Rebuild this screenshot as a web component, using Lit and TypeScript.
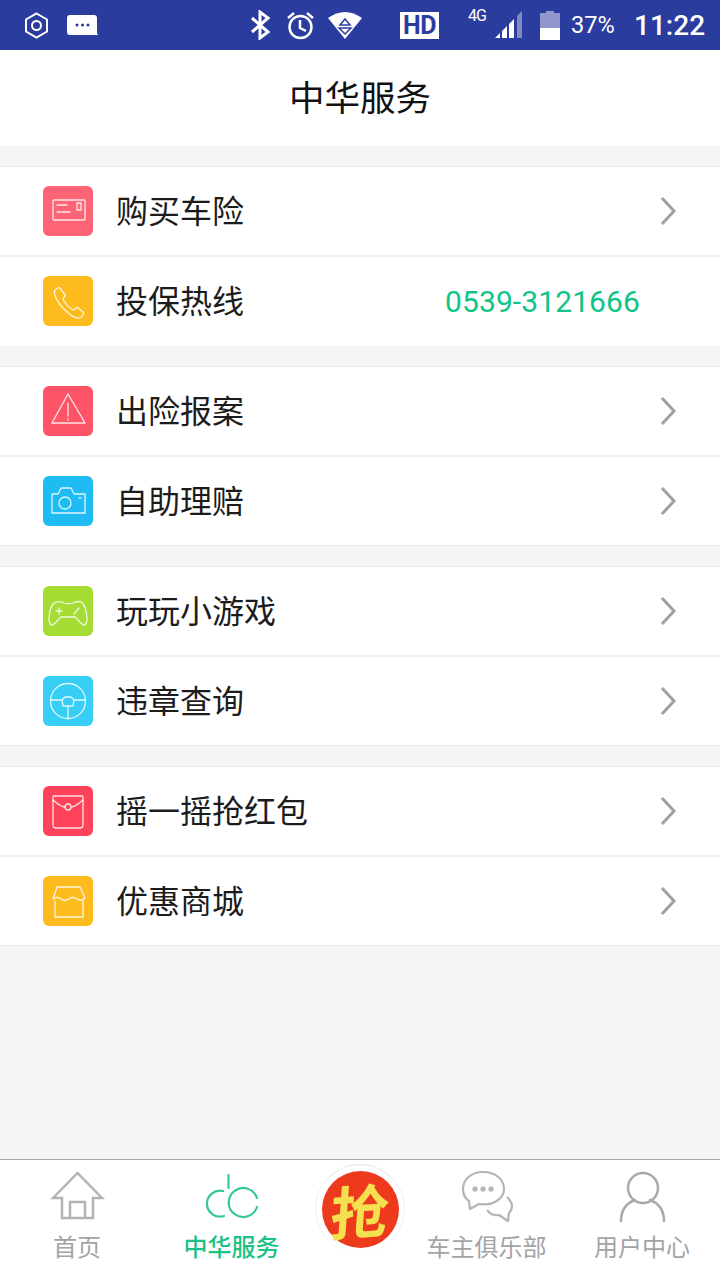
import { LitElement, css, html, svg } from "lit";
import { customElement } from "lit/decorators.js";

const sw = (d: unknown) => html`<svg viewBox="0 0 50 50" fill="none" stroke="rgba(255,255,255,0.85)" stroke-width="1.3" stroke-linecap="round" stroke-linejoin="round">${d}</svg>`;

const icons = {
  card: sw(svg`<rect x="10" y="14" width="32" height="20" rx="1"/><path d="M14 19h10M14 26h13"/><rect x="34" y="17" width="4" height="7"/>`),
  phone: sw(svg`<path d="M12 14c2-2 4-3 5-2l5 7c.5 1-2 3-2 4 1 3 6 9 10 11 1 .5 3-3 4.500-2.500l6 5c1 1-1 4-3 5-3 1.500-8-.5-14-6S9 19 12 14z"/>`),
  warn: sw(svg`<path d="M25 8L42 37H9z"/><path d="M25 17v13M25 33v1"/>`),
  camera: sw(svg`<path d="M9 18h6l3-6h10l3 6h11v19H9z"/><circle cx="22" cy="27" r="6"/><path d="M36 22h2"/>`),
  game: sw(svg`<path d="M10 18c3-3 7-3 11-1 3 1 6 1 9 0 4-2 8-2 10 1 3 4 6 17 2 21-3 1-7-6-10-8H18c-3 2-7 9-10 8-4-4-1-17 2-21z"/><path d="M13 25h6M16 22v6M31 28l5-6"/>`),
  wheel: sw(svg`<circle cx="25" cy="25" r="17.500"/><path d="M8 24h11l3-3h6l3 3h11M25 30v13M20 30h10l1-6M20 30l-1-6"/>`),
  envelope: sw(svg`<path d="M11 10h28q1 0 1 1v28q0 3-3 3H13q-3 0-3-3V11q0-1 1-1z"/><path d="M10 14q8 7 12 7M40 14q-8 7-12 7"/><circle cx="25" cy="21" r="3"/>`),
  store: sw(svg`<path d="M14 11h23l5 11q-4 4-8 1q-4-3-8 0q-4 3-8 0q-4-3-8 0z"/><path d="M12 25v16h28V25"/>`),
};

const groups = [
  [
    { icon: icons.card, color: "#fd6577", label: "购买车险" },
    { icon: icons.phone, color: "#fdbb1e", label: "投保热线", phone: "0539-3121666" },
  ],
  [
    { icon: icons.warn, color: "#fe5468", label: "出险报案" },
    { icon: icons.camera, color: "#1fbcf3", label: "自助理赔" },
  ],
  [
    { icon: icons.game, color: "#a6dd35", label: "玩玩小游戏" },
    { icon: icons.wheel, color: "#36cef5", label: "违章查询" },
  ],
  [
    { icon: icons.envelope, color: "#fd4259", label: "摇一摇抢红包" },
    { icon: icons.store, color: "#fdbb1e", label: "优惠商城" },
  ],
];

@customElement("app-root")
export class AppRoot extends LitElement {
  static styles = css`
    :host {
      display: flex;
      flex-direction: column;
      width: 720px;
      height: 1280px;
      background: #f5f5f5;
      font-family: "Noto Sans CJK SC", "Noto Sans", sans-serif;
      overflow: hidden;
    }

    .status {
      height: 50px;
      flex: none;
      display: flex;
      align-items: center;
      background: #2b3c9f;
      color: #fff;
      font-family: Roboto, sans-serif;
    }
    .status svg { display: block; flex: none; }
    .hex { margin-left: 23px; }
    .msg { margin-left: 17px; }
    .bt { margin-left: 152px; }
    .alarm { margin-left: 15px; }
    .wifi { margin-left: 13px; }
    .hd {
      margin-left: 38px;
      width: 39px;
      height: 27px;
      background: #fff;
      color: #2b3c9f;
      font-size: 25px;
      font-weight: 700;
      line-height: 28px;
      text-align: center;
      letter-spacing: -0.5px;
    }
    .four-g {
      margin: -20px 0 0 29px;
      width: 20px;
      font-size: 16px;
      letter-spacing: -1px;
    }
    .signal { margin-left: 7px; }
    .battery { margin-left: 16px; }
    .pct { margin-left: 11px; font-size: 23.500px; width: 49px; }
    .time { margin-left: 14px; font-size: 28px; font-weight: 500; }

    .title {
      height: 90px;
      padding-bottom: 6px;
      flex: none;
      display: flex;
      align-items: center;
      justify-content: center;
      background: #fff;
      color: #111;
      font-size: 35.500px;
      margin-bottom: 20px;
    }

    .group {
      border-top: 1px solid #e4e4e4;
      border-bottom: 1px solid #e4e4e4;
      background: #fff;
      margin-bottom: 20px;
    }
    .title + .group { border-bottom-color: transparent; }

    .row {
      height: 88px;
      display: flex;
      align-items: center;
      padding-left: 43px;
    }
    .row + .row { border-top: 2px solid #eee; }
    .badge {
      width: 50px;
      height: 50px;
      border-radius: 6px;
      flex: none;
    }
    .badge svg { display: block; width: 50px; height: 50px; }
    .label {
      margin-left: 23px;
      padding-bottom: 4px;
      font-size: 32px;
      line-height: 40px;
      color: #1c1c1c;
      flex: 1;
    }
    .phone {
      margin-right: 80px;
      font-family: Roboto, sans-serif;
      font-size: 30px;
      letter-spacing: 0.1px;
      color: #0fc488;
    }
    .chevron { margin-right: 43px; flex: none; display: block; }

    .spacer { flex: 1; margin-top: -20px; }

    .tabs {
      height: 120px;
      flex: none;
      display: grid;
      grid-template-columns: 154px 155px 100px 155px 156px;
      border-top: 1px solid #a8a8a8;
      background: #fff;
    }
    .tab {
      display: flex;
      flex-direction: column;
      align-items: center;
      font-size: 24px;
      line-height: 30px;
      color: #a3a3a3;
      padding-top: 9px;
    }
    .tab svg { display: block; height: 60px; width: 60px; margin-bottom: 2px; }
    .tab.active { color: #1cc285; font-weight: 500; }
    .grab {
      position: relative;
      display: flex;
      justify-content: center;
    }
    .grab-ring {
      position: absolute;
      top: 4px;
      left: 6px;
      width: 90px;
      height: 90px;
      box-sizing: border-box;
      border-radius: 50%;
      border: 1px solid;
      border-color: #e6e6e6 #f2f2f2 #fafafa;
      display: flex;
      align-items: center;
      justify-content: center;
      background: #fff;
    }
    .grab-coin {
      width: 77px;
      height: 77px;
      border-radius: 50%;
      background: #ee3a1c;
      display: flex;
      align-items: center;
      justify-content: center;
    }
    .grab-coin span {
      color: #f5e04f;
      font-size: 58px;
      font-weight: 700;
      line-height: 76px;
      transform: skewX(-8deg) rotate(-4deg);
    }
  `;

  render() {
    return html`
      <div class="status">
        <svg class="hex" width="27" height="27" viewBox="0 0 27 27" fill="none" stroke="#fff" stroke-width="2">
          <path d="M13.500 1.500L24 7.500v12l-10.500 6-10.500-6v-12z"/><circle cx="13.500" cy="13.500" r="4.500"/>
        </svg>
        <svg class="msg" width="31" height="21" viewBox="0 0 31 21">
          <path fill="#fff" d="M3 0h24q3 0 3 3v15l1 2H3q-3 0-3-3V3q0-3 3-3z"/>
          <circle cx="10" cy="10" r="1.500" fill="#2b3c9f"/><circle cx="15.500" cy="10" r="1.500" fill="#2b3c9f"/><circle cx="21" cy="10" r="1.500" fill="#2b3c9f"/>
        </svg>
        <svg class="bt" width="21" height="30" viewBox="0 0 21 30" fill="none" stroke="#fff" stroke-width="3">
          <path d="M2 8l16 14-8 6V2l8 6L2 22"/>
        </svg>
        <svg class="alarm" width="29" height="29" viewBox="0 0 29 29" fill="none" stroke="#fff" stroke-width="2.500">
          <circle cx="14.500" cy="16" r="11"/><path d="M14 9v8l6 3M2 7l6-5M27 7l-6-5"/>
        </svg>
        <svg class="wifi" width="34" height="28" viewBox="0 0 34 28">
          <path fill="#fff" d="M0 7Q17-5 34 7L17 28z"/>
          <path fill="none" stroke="#2b3c9f" stroke-width="1.500" d="M17 8l5 6H12zM11 17h12l-6 6z"/>
        </svg>
        <div class="hd">HD</div>
        <div class="four-g">4G</div>
        <svg class="signal" width="29" height="30" viewBox="0 0 29 30">
          <path fill="#fff" d="M0 28l5-5v5zM7 21l5-5v12H7zM14 14l5-5v19h-5z"/>
          <path fill="#8089c4" d="M22 6l5-5v27h-5z"/>
        </svg>
        <svg class="battery" width="20" height="29" viewBox="0 0 20 29">
          <path fill="#8f97cc" d="M6 0h8v2h6v15H0V2h6z"/>
          <path fill="#fff" d="M0 17h20v12H0z"/>
        </svg>
        <div class="pct">37%</div>
        <div class="time">11:22</div>
      </div>

      <div class="title">中华服务</div>

      ${groups.map(
        (rows) => html`
          <div class="group">
            ${rows.map(
              (r: { icon: unknown; color: string; label: string; phone?: string }) => html`
                <div class="row">
                  <div class="badge" style="background:${r.color}">${r.icon}</div>
                  <div class="label">${r.label}</div>
                  ${r.phone
                    ? html`<div class="phone">${r.phone}</div>`
                    : html`<svg class="chevron" width="17" height="30" viewBox="0 0 17 30" fill="none" stroke="#a0a0a0" stroke-width="3">
                        <path d="M2 2l12 13L2 28"/>
                      </svg>`}
                </div>
              `
            )}
          </div>
        `
      )}

      <div class="spacer"></div>

      <div class="tabs">
        <div class="tab">
          <svg viewBox="0 0 60 60" fill="none" stroke="#b4b4b4" stroke-width="2.500">
            <path d="M6 29L30.500 4 55 29H46V49H15V29zM23 49V33h15v16"/>
          </svg>
          首页
        </div>
        <div class="tab active">
          <svg viewBox="0 0 60 60" fill="none" stroke="#36c98f" stroke-width="2.200" stroke-linecap="round">
            <path d="M21 22A13 13 0 1 0 22 47M26.500 6v13M55 29A14.500 14.500 0 1 0 55 38"/>
          </svg>
          中华服务
        </div>
        <div class="grab">
          <div class="grab-ring"><div class="grab-coin"><span>抢</span></div></div>
        </div>
        <div class="tab">
          <svg viewBox="0 0 60 60" fill="none" stroke="#b4b4b4" stroke-width="2.200" stroke-linejoin="round">
            <path d="M26 3c-11 0-20 7-20 17 0 6 3 10 6 12l1 8 9-5c14 2 25-5 25-15 0-10-9-17-21-17z"/>
            <path d="M50 28c3 3 5 6 5 9 0 3-1 5-3 7l-1 8-9-6c-4 1-9-1-12-5"/>
            <circle cx="18" cy="20" r="1.500" fill="#b4b4b4"/><circle cx="26" cy="20" r="1.500" fill="#b4b4b4"/><circle cx="34" cy="20" r="1.500" fill="#b4b4b4"/>
          </svg>
          车主俱乐部
        </div>
        <div class="tab">
          <svg viewBox="0 0 60 60" fill="none" stroke="#aaa" stroke-width="2.500" stroke-linecap="round">
            <circle cx="31" cy="19" r="15"/><path d="M9 52c0-11 6-18 14-21M52 52c0-11-6-18-14-21"/>
          </svg>
          用户中心
        </div>
      </div>
    `;
  }
}
